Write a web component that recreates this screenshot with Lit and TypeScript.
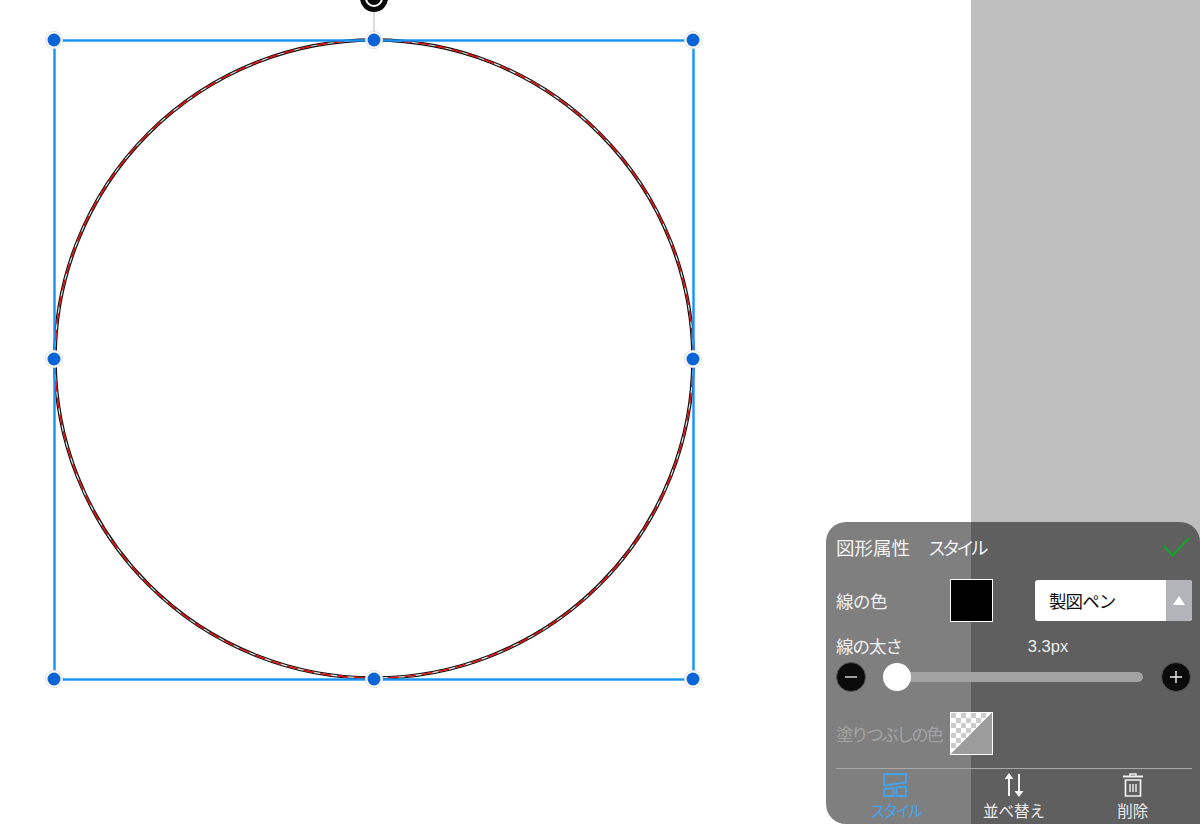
import { LitElement, html, css, svg } from 'lit';
import { customElement } from 'lit/decorators.js';

const handles = [
  [54, 40], [374, 40], [693, 40],
  [54, 359], [693, 359],
  [54, 679], [374, 679], [693, 679],
];

@customElement('app-root')
export class AppRoot extends LitElement {
  static styles = css`
    :host {
      display: block;
      width: 1200px;
      height: 824px;
      position: relative;
      overflow: hidden;
      background: #fff;
      font-family: "Liberation Sans", "Noto Sans CJK JP", sans-serif;
    }
    .stage {
      display: flex;
      height: 824px;
    }
    .paper {
      width: 971px;
      background: #fff;
    }
    .side {
      flex: 1;
      background: #bfbfbf;
    }
    .canvas {
      position: absolute;
      left: 0;
      top: 0;
    }
    .panel {
      position: absolute;
      left: 826px;
      top: 522px;
      width: 374px;
      height: 302px;
      box-sizing: border-box;
      padding: 0 8px 0 10px;
      border-radius: 20px 20px 0 20px;
      background: rgba(0, 0, 0, 0.5);
      color: #fff;
      display: flex;
      flex-direction: column;
      font-family: "Noto Sans CJK JP", "Liberation Sans", sans-serif;
    }
    .title {
      height: 50px;
      display: flex;
      align-items: center;
      gap: 18px;
      font-size: 18.5px;
      color: #f4f4f4;
    }
    .title .check {
      margin-left: auto;
      margin-right: 2px;
    }
    .kana {
      font-size: 18px;
      letter-spacing: -3.8px;
    }
    .row {
      display: flex;
      align-items: center;
    }
    .label {
      width: 114px;
      font-size: 17.5px;
      letter-spacing: -0.5px;
      color: #f0f0f0;
      white-space: nowrap;
    }
    .stroke-row {
      height: 44px;
      margin-top: 6px;
    }
    .swatch {
      width: 43px;
      height: 43px;
      box-sizing: border-box;
      border: 1px solid #fff;
      background: #000;
    }
    .select {
      margin-left: 42px;
      width: 157px;
      height: 41px;
      display: flex;
      border-radius: 3px;
      overflow: hidden;
      background: #fff;
      color: #111;
      font-size: 17.5px;
    }
    .select span {
      flex: 1;
      padding-left: 14px;
      line-height: 41px;
      letter-spacing: -0.9px;
    }
    .select i {
      width: 26px;
      background: #b3b3ba;
      display: flex;
      align-items: center;
      justify-content: center;
    }
    .width-head {
      height: 30px;
      margin-top: 8px;
    }
    .width-head .label {
      letter-spacing: -1px;
    }
    .width-head .value {
      margin-left: 63px;
      width: 70px;
      text-align: center;
      font-family: "Liberation Sans", sans-serif;
      font-size: 16.5px;
      color: #eee;
      padding-top: 3px;
    }
    .slider {
      height: 32px;
      margin-top: 1px;
      margin-right: 1px;
    }
    .round {
      width: 30px;
      height: 30px;
      box-sizing: border-box;
      border-radius: 50%;
      background: #0b0b0b;
      border: 1px solid #555;
      flex: none;
      display: flex;
      align-items: center;
      justify-content: center;
    }
    .track {
      flex: 1;
      margin: 0 18px 0 31px;
      height: 10px;
      border-radius: 5px;
      background: #a2a2a2;
      position: relative;
    }
    .thumb {
      position: absolute;
      left: -14px;
      top: -9px;
      width: 28px;
      height: 28px;
      border-radius: 50%;
      background: #fff;
    }
    .fill-row {
      height: 44px;
      margin-top: 18px;
    }
    .fill-row .label {
      color: #a3a3a3;
      letter-spacing: -2.5px;
    }
    .swatch.none {
      background: none;
      overflow: hidden;
    }
    .tabs {
      margin-top: 13px;
      border-top: 1px solid #a8a8a8;
      display: grid;
      grid-template-columns: repeat(3, 1fr);
      flex: 1;
    }
    .tab {
      display: flex;
      flex-direction: column;
      align-items: center;
      font-size: 15.5px;
      line-height: 20px;
      color: #ececec;
      padding-top: 4px;
    }
    .tab svg {
      margin-bottom: 3px;
    }
    .tab.active {
      color: #42a5f0;
      letter-spacing: -3px;
    }
  `;

  renderCanvas() {
    return html`<svg class="canvas" width="971" height="824" viewBox="0 0 971 824">
      <circle cx="374" cy="359" r="319" fill="none" stroke="#111" stroke-width="3.6"></circle>
      <circle cx="374" cy="359" r="319" fill="none" stroke="#e8e8e8" stroke-width="1.2"></circle>
      <circle cx="374" cy="359" r="319" fill="none" stroke="#d80c0c" stroke-width="1.6" stroke-dasharray="11 6"></circle>
      <rect x="54.5" y="40.5" width="639" height="639" fill="none" stroke="#1592f4" stroke-width="2.4"></rect>
      <line x1="374" y1="10" x2="374" y2="40" stroke="#bbb" stroke-width="1"></line>
      <circle cx="374" cy="-2" r="14" fill="#0a0a0a"></circle>
      <circle cx="374" cy="-2" r="8" fill="none" stroke="#fff" stroke-width="2"></circle>
      ${handles.map(([x, y]) => svg`
        <circle cx=${x} cy=${y} r="8.5" fill="#fff" stroke="#dcdcdc" stroke-width="1"></circle>
        <circle cx=${x} cy=${y} r="6.5" fill="#0a64d6"></circle>
      `)}
    </svg>`;
  }

  render() {
    return html`
      <div class="stage">
        <div class="paper"></div>
        <div class="side"></div>
      </div>
      ${this.renderCanvas()}
      <div class="panel">
        <div class="title">
          <span>図形属性</span>
          <span class="kana">スタイル</span>
          <svg class="check" width="27" height="20" viewBox="0 0 27 20">
            <path d="M1 9 L9.5 18.5 L26 1" fill="none" stroke="#12a526" stroke-width="2"></path>
          </svg>
        </div>
        <div class="row stroke-row">
          <div class="label">線の色</div>
          <div class="swatch"></div>
          <div class="select">
            <span>製図ペン</span>
            <i><svg width="12" height="9" viewBox="0 0 12 9"><path d="M6 0 L12 9 L0 9 Z" fill="#fff"></path></svg></i>
          </div>
        </div>
        <div class="row width-head">
          <div class="label">線の太さ</div>
          <div class="value">3.3px</div>
        </div>
        <div class="row slider">
          <div class="round">
            <svg width="14" height="14" viewBox="0 0 14 14"><path d="M1 7 H13" stroke="#ddd" stroke-width="1.4"></path></svg>
          </div>
          <div class="track"><div class="thumb"></div></div>
          <div class="round">
            <svg width="14" height="14" viewBox="0 0 14 14"><path d="M1 7 H13 M7 1 V13" stroke="#eee" stroke-width="1.4"></path></svg>
          </div>
        </div>
        <div class="row fill-row">
          <div class="label">塗りつぶしの色</div>
          <div class="swatch none">
            <svg width="41" height="41" viewBox="0 0 41 41">
              <defs>
                <pattern id="chk" width="10" height="10" patternUnits="userSpaceOnUse">
                  <rect width="10" height="10" fill="#fff"></rect>
                  <rect width="5" height="5" fill="#ccc"></rect>
                  <rect x="5" y="5" width="5" height="5" fill="#ccc"></rect>
                </pattern>
              </defs>
              <path d="M0 0 H41 L0 41 Z" fill="url(#chk)"></path>
              <path d="M41 0 V41 H0 Z" fill="#9c9c9c"></path>
            </svg>
          </div>
        </div>
        <div class="tabs">
          <div class="tab active">
            <svg width="24" height="24" viewBox="0 0 24 24" fill="none" stroke="#42a5f0" stroke-width="1.8">
              <path d="M1 1 H23 V9.5 L1 12.5 Z"></path>
              <path d="M1 16 L10.5 15 V23 H1 Z"></path>
              <path d="M13.5 14.5 L23 13.5 V23 H13.5 Z"></path>
            </svg>
            <span>スタイル</span>
          </div>
          <div class="tab">
            <svg width="24" height="24" viewBox="0 0 24 24" fill="#f2f2f2">
              <path d="M7 0 L11.5 6 H8 V23 H6 V6 H2.5 Z"></path>
              <path d="M16 1 H18 V18 H21.5 L17 24 L12.5 18 H16 Z"></path>
            </svg>
            <span>並べ替え</span>
          </div>
          <div class="tab">
            <svg width="24" height="24" viewBox="0 0 24 24" fill="none" stroke="#f2f2f2" stroke-width="1.4">
              <path d="M9 3 V1 H15 V3"></path>
              <path d="M2 3.5 H22" stroke-width="2"></path>
              <path d="M4.5 7 H19.5 V23 H4.5 Z" stroke-width="1.7"></path>
              <path d="M9 11 V19 M12 11 V19 M15 11 V19"></path>
            </svg>
            <span>削除</span>
          </div>
        </div>
      </div>
    `;
  }
}
